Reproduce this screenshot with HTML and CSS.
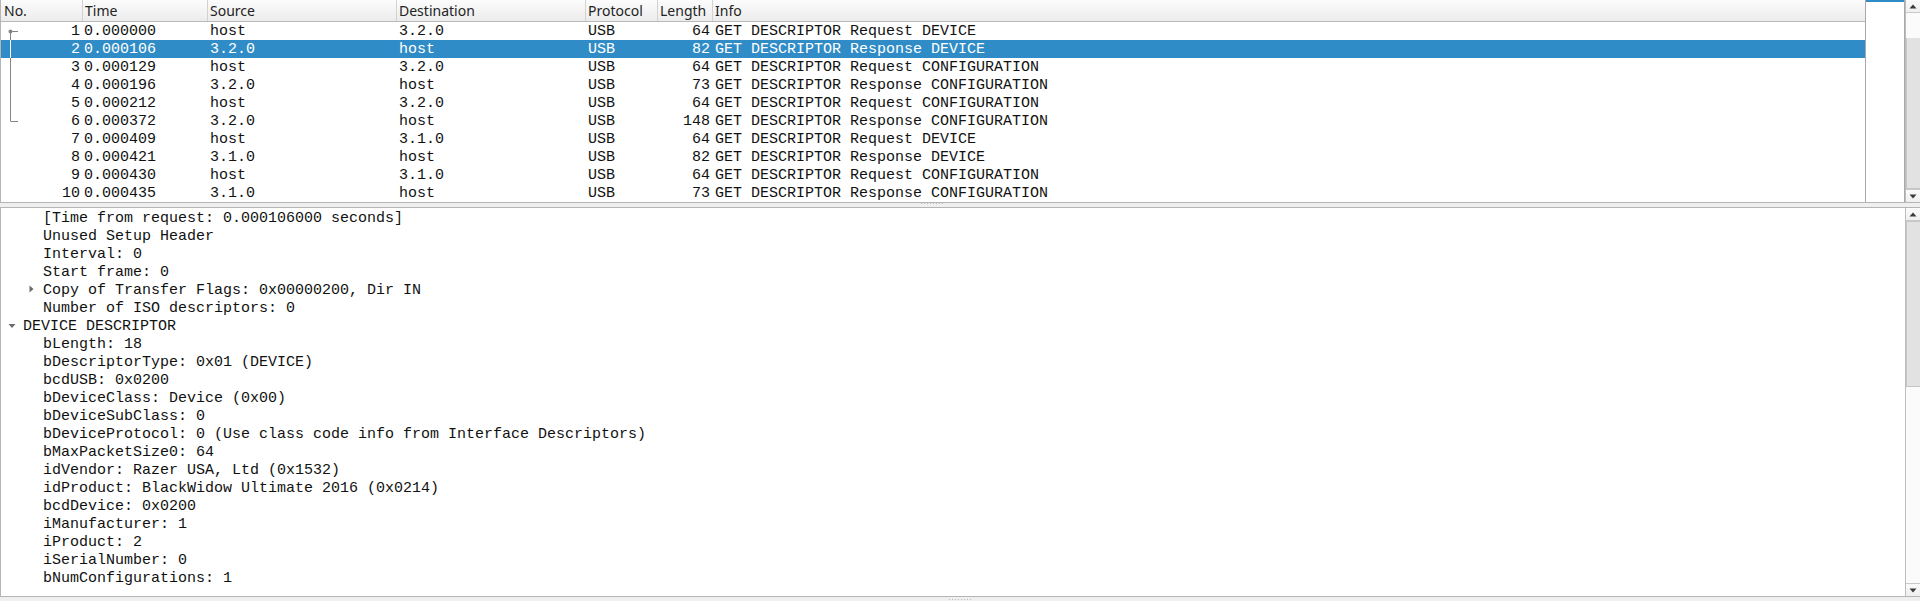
FILE: index.html
```html
<!DOCTYPE html>
<html>
<head>
<meta charset="utf-8">
<link rel="stylesheet" href="styles.css">
</head>
<body>
<div class="app">
  <section class="plist">
    <div class="plist-main">
      <div class="phead">
        <div class="hc">No.</div>
        <div class="hc">Time</div>
        <div class="hc">Source</div>
        <div class="hc">Destination</div>
        <div class="hc">Protocol</div>
        <div class="hc">Length</div>
        <div class="hc last">Info</div>
      </div>
      <div class="prows">
        <svg class="conv" width="20" height="102" viewBox="0 0 20 102">
          <line x1="9.5" y1="9" x2="9.5" y2="18" stroke="#858585" stroke-width="1"/>
          <line x1="9.5" y1="18" x2="9.5" y2="36" stroke="#ffffff" stroke-width="1"/>
          <line x1="9.5" y1="36" x2="9.5" y2="99" stroke="#858585" stroke-width="1"/>
          <line x1="9.5" y1="9.5" x2="17" y2="9.5" stroke="#858585" stroke-width="1"/>
          <line x1="9.5" y1="99.5" x2="17" y2="99.5" stroke="#858585" stroke-width="1"/>
          <circle cx="9.5" cy="9.5" r="2" fill="#858585"/>
        </svg>
        <div class="prow"><span class="c-no">1</span><span class="c-time">0.000000</span><span class="c-src">host</span><span class="c-dst">3.2.0</span><span class="c-proto">USB</span><span class="c-len">64</span><span class="c-info">GET DESCRIPTOR Request DEVICE</span></div>
        <div class="prow sel"><span class="c-no">2</span><span class="c-time">0.000106</span><span class="c-src">3.2.0</span><span class="c-dst">host</span><span class="c-proto">USB</span><span class="c-len">82</span><span class="c-info">GET DESCRIPTOR Response DEVICE</span></div>
        <div class="prow"><span class="c-no">3</span><span class="c-time">0.000129</span><span class="c-src">host</span><span class="c-dst">3.2.0</span><span class="c-proto">USB</span><span class="c-len">64</span><span class="c-info">GET DESCRIPTOR Request CONFIGURATION</span></div>
        <div class="prow"><span class="c-no">4</span><span class="c-time">0.000196</span><span class="c-src">3.2.0</span><span class="c-dst">host</span><span class="c-proto">USB</span><span class="c-len">73</span><span class="c-info">GET DESCRIPTOR Response CONFIGURATION</span></div>
        <div class="prow"><span class="c-no">5</span><span class="c-time">0.000212</span><span class="c-src">host</span><span class="c-dst">3.2.0</span><span class="c-proto">USB</span><span class="c-len">64</span><span class="c-info">GET DESCRIPTOR Request CONFIGURATION</span></div>
        <div class="prow"><span class="c-no">6</span><span class="c-time">0.000372</span><span class="c-src">3.2.0</span><span class="c-dst">host</span><span class="c-proto">USB</span><span class="c-len">148</span><span class="c-info">GET DESCRIPTOR Response CONFIGURATION</span></div>
        <div class="prow"><span class="c-no">7</span><span class="c-time">0.000409</span><span class="c-src">host</span><span class="c-dst">3.1.0</span><span class="c-proto">USB</span><span class="c-len">64</span><span class="c-info">GET DESCRIPTOR Request DEVICE</span></div>
        <div class="prow"><span class="c-no">8</span><span class="c-time">0.000421</span><span class="c-src">3.1.0</span><span class="c-dst">host</span><span class="c-proto">USB</span><span class="c-len">82</span><span class="c-info">GET DESCRIPTOR Response DEVICE</span></div>
        <div class="prow"><span class="c-no">9</span><span class="c-time">0.000430</span><span class="c-src">host</span><span class="c-dst">3.1.0</span><span class="c-proto">USB</span><span class="c-len">64</span><span class="c-info">GET DESCRIPTOR Request CONFIGURATION</span></div>
        <div class="prow"><span class="c-no">10</span><span class="c-time">0.000435</span><span class="c-src">3.1.0</span><span class="c-dst">host</span><span class="c-proto">USB</span><span class="c-len">73</span><span class="c-info">GET DESCRIPTOR Response CONFIGURATION</span></div>
      </div>
    </div>
    <div class="minimap"><div class="mark"></div></div>
    <div class="vscroll">
      <div class="sb-btn"><svg width="8" height="5" viewBox="0 0 8 5"><polygon points="0.5,4.5 4,0.5 7.5,4.5" fill="#3a3a3a"/></svg></div>
      <div class="sb-space pl-pre"></div>
      <div class="sb-handle pl-handle"></div>
      <div class="sb-btn down"><svg width="8" height="5" viewBox="0 0 8 5"><polygon points="0.5,0.5 7.5,0.5 4,4.5" fill="#3a3a3a"/></svg></div>
    </div>
  </section>
  <div class="splitter"><span class="grip"></span></div>
  <section class="details">
    <div class="tree">
      <div class="trow l1"><span class="exp"></span><span class="tt">[Time from request: 0.000106000 seconds]</span></div>
      <div class="trow l1"><span class="exp"></span><span class="tt">Unused Setup Header</span></div>
      <div class="trow l1"><span class="exp"></span><span class="tt">Interval: 0</span></div>
      <div class="trow l1"><span class="exp"></span><span class="tt">Start frame: 0</span></div>
      <div class="trow l1"><span class="exp"><svg class="tri-r" width="8" height="8" viewBox="0 0 8 8"><polygon points="1.5,0.5 5.5,4 1.5,7.5" fill="#6a6a6a"/></svg></span><span class="tt">Copy of Transfer Flags: 0x00000200, Dir IN</span></div>
      <div class="trow l1"><span class="exp"></span><span class="tt">Number of ISO descriptors: 0</span></div>
      <div class="trow l0"><span class="exp"><svg class="tri-d" width="8" height="8" viewBox="0 0 8 8"><polygon points="0.5,2 7.5,2 4,6" fill="#6a6a6a"/></svg></span><span class="tt">DEVICE DESCRIPTOR</span></div>
      <div class="trow l1"><span class="exp"></span><span class="tt">bLength: 18</span></div>
      <div class="trow l1"><span class="exp"></span><span class="tt">bDescriptorType: 0x01 (DEVICE)</span></div>
      <div class="trow l1"><span class="exp"></span><span class="tt">bcdUSB: 0x0200</span></div>
      <div class="trow l1"><span class="exp"></span><span class="tt">bDeviceClass: Device (0x00)</span></div>
      <div class="trow l1"><span class="exp"></span><span class="tt">bDeviceSubClass: 0</span></div>
      <div class="trow l1"><span class="exp"></span><span class="tt">bDeviceProtocol: 0 (Use class code info from Interface Descriptors)</span></div>
      <div class="trow l1"><span class="exp"></span><span class="tt">bMaxPacketSize0: 64</span></div>
      <div class="trow l1"><span class="exp"></span><span class="tt">idVendor: Razer USA, Ltd (0x1532)</span></div>
      <div class="trow l1"><span class="exp"></span><span class="tt">idProduct: BlackWidow Ultimate 2016 (0x0214)</span></div>
      <div class="trow l1"><span class="exp"></span><span class="tt">bcdDevice: 0x0200</span></div>
      <div class="trow l1"><span class="exp"></span><span class="tt">iManufacturer: 1</span></div>
      <div class="trow l1"><span class="exp"></span><span class="tt">iProduct: 2</span></div>
      <div class="trow l1"><span class="exp"></span><span class="tt">iSerialNumber: 0</span></div>
      <div class="trow l1"><span class="exp"></span><span class="tt">bNumConfigurations: 1</span></div>
    </div>
    <div class="vscroll">
      <div class="sb-btn"><svg width="8" height="5" viewBox="0 0 8 5"><polygon points="0.5,4.5 4,0.5 7.5,4.5" fill="#3a3a3a"/></svg></div>
      <div class="sb-handle dt-handle"></div>
      <div class="sb-space dt-post"></div>
      <div class="sb-btn down"><svg width="8" height="5" viewBox="0 0 8 5"><polygon points="0.5,0.5 7.5,0.5 4,4.5" fill="#3a3a3a"/></svg></div>
    </div>
  </section>
  <div class="bottom"><span class="grip"></span></div>
</div>
</body>
</html>
```

FILE: styles.css
```css
* { box-sizing: border-box; }
html, body { margin: 0; padding: 0; }
body {
  width: 1920px;
  height: 601px;
  overflow: hidden;
  background: #efefef;
  font-family: "Liberation Mono", "DejaVu Sans Mono", monospace;
  font-size: 15px;
  color: #111;
}
.app { display: flex; flex-direction: column; height: 601px; }

/* packet list */
.plist {
  height: 203px;
  display: flex;
  background: #fff;
  border-left: 1px solid #b5b5b5;
  border-bottom: 1px solid #b5b5b5;
}
.plist-main { width: 1864px; display: flex; flex-direction: column; }
.phead {
  height: 22px;
  display: grid;
  grid-template-columns: 82px 125px 189px 189px 72px 55px 1fr;
  background: linear-gradient(#fcfcfc, #ececec);
  border-bottom: 1px solid #b9b9b9;
  font-family: "Noto Sans", "Open Sans", sans-serif;
  font-size: 14px;
  color: #232323;
}
.hc {
  line-height: 20px;
  padding-top: 1px;
  padding-left: 2px;
  border-right: 1px solid #d2d2d2;
  white-space: nowrap;
  overflow: hidden;
}
.hc:first-child { padding-left: 3px; }
.hc.last { border-right: none; }

.prows { position: relative; flex: 1; }
.conv { position: absolute; left: 0; top: 0; z-index: 2; }
.prow {
  height: 18px;
  line-height: 16px;
  padding-top: 2px;
  display: grid;
  grid-template-columns: 82px 125px 189px 189px 72px 55px 1fr;
  white-space: pre;
}
.prow.sel { background: #308cc6; color: #fff; }
.prow span { overflow: hidden; }
.c-no { text-align: right; padding-right: 3px; }
.c-time { padding-left: 1px; }
.c-src, .c-dst, .c-proto { padding-left: 2px; }
.c-len { text-align: right; padding-right: 3px; }
.c-info { padding-left: 2px; }

.minimap {
  width: 40px;
  background: #fff;
  border-left: 1px solid #a9a9a9;
  border-right: 1px solid #a9a9a9;
}
.minimap .mark { height: 2px; background: #308cc6; }

/* scrollbars */
.vscroll {
  width: 15px;
  display: flex;
  flex-direction: column;
  border-left: 1px solid #bdbdbd;
  background: #f7f7f7;
}
.sb-btn {
  height: 13px;
  display: flex;
  align-items: center;
  justify-content: center;
  background: linear-gradient(#fbfbfb, #efefef);
  border-bottom: 1px solid #c9c9c9;
}
.sb-btn.down { border-bottom: none; border-top: 1px solid #c9c9c9; }
.sb-space { background: #fbfbfb; }
.sb-handle {
  background: #e2e2e2;
  border-left: 1px solid #c6c6c6;
  border-bottom: 1px solid #c6c6c6;
}
.pl-pre { height: 25px; }
.pl-handle { flex: 1; }
.dt-handle { height: 166px; border-top: 1px solid #c6c6c6; }
.dt-post { flex: 1; }

/* splitter */
.splitter {
  height: 4px;
  display: flex;
  justify-content: center;
  align-items: flex-start;
  padding-right: 56px;
}
.grip {
  width: 22px;
  height: 1px;
  background: repeating-linear-gradient(90deg, #b9b9b9 0 1px, transparent 1px 3px);
}

/* details */
.details {
  height: 390px;
  display: flex;
  background: #fff;
  border-top: 1px solid #b5b5b5;
  border-left: 1px solid #b5b5b5;
  border-bottom: 1px solid #b5b5b5;
}
.tree { flex: 1; }
.trow {
  height: 18px;
  line-height: 16px;
  padding-top: 3px;
  display: flex;
  white-space: pre;
  color: #111;
}
.trow.l0 { padding-left: 2px; }
.trow.l1 { padding-left: 22px; }
.exp {
  width: 20px;
  height: 15px;
  margin-top: -3px;
  display: flex;
  align-items: center;
  flex: none;
}
.tri-r { margin-left: 5px; margin-top: 2px; }
.tri-d { margin-left: 5px; margin-top: 4px; }

.bottom {
  height: 4px;
  display: flex;
  justify-content: center;
  align-items: flex-end;
  padding-bottom: 1px;
}
```
